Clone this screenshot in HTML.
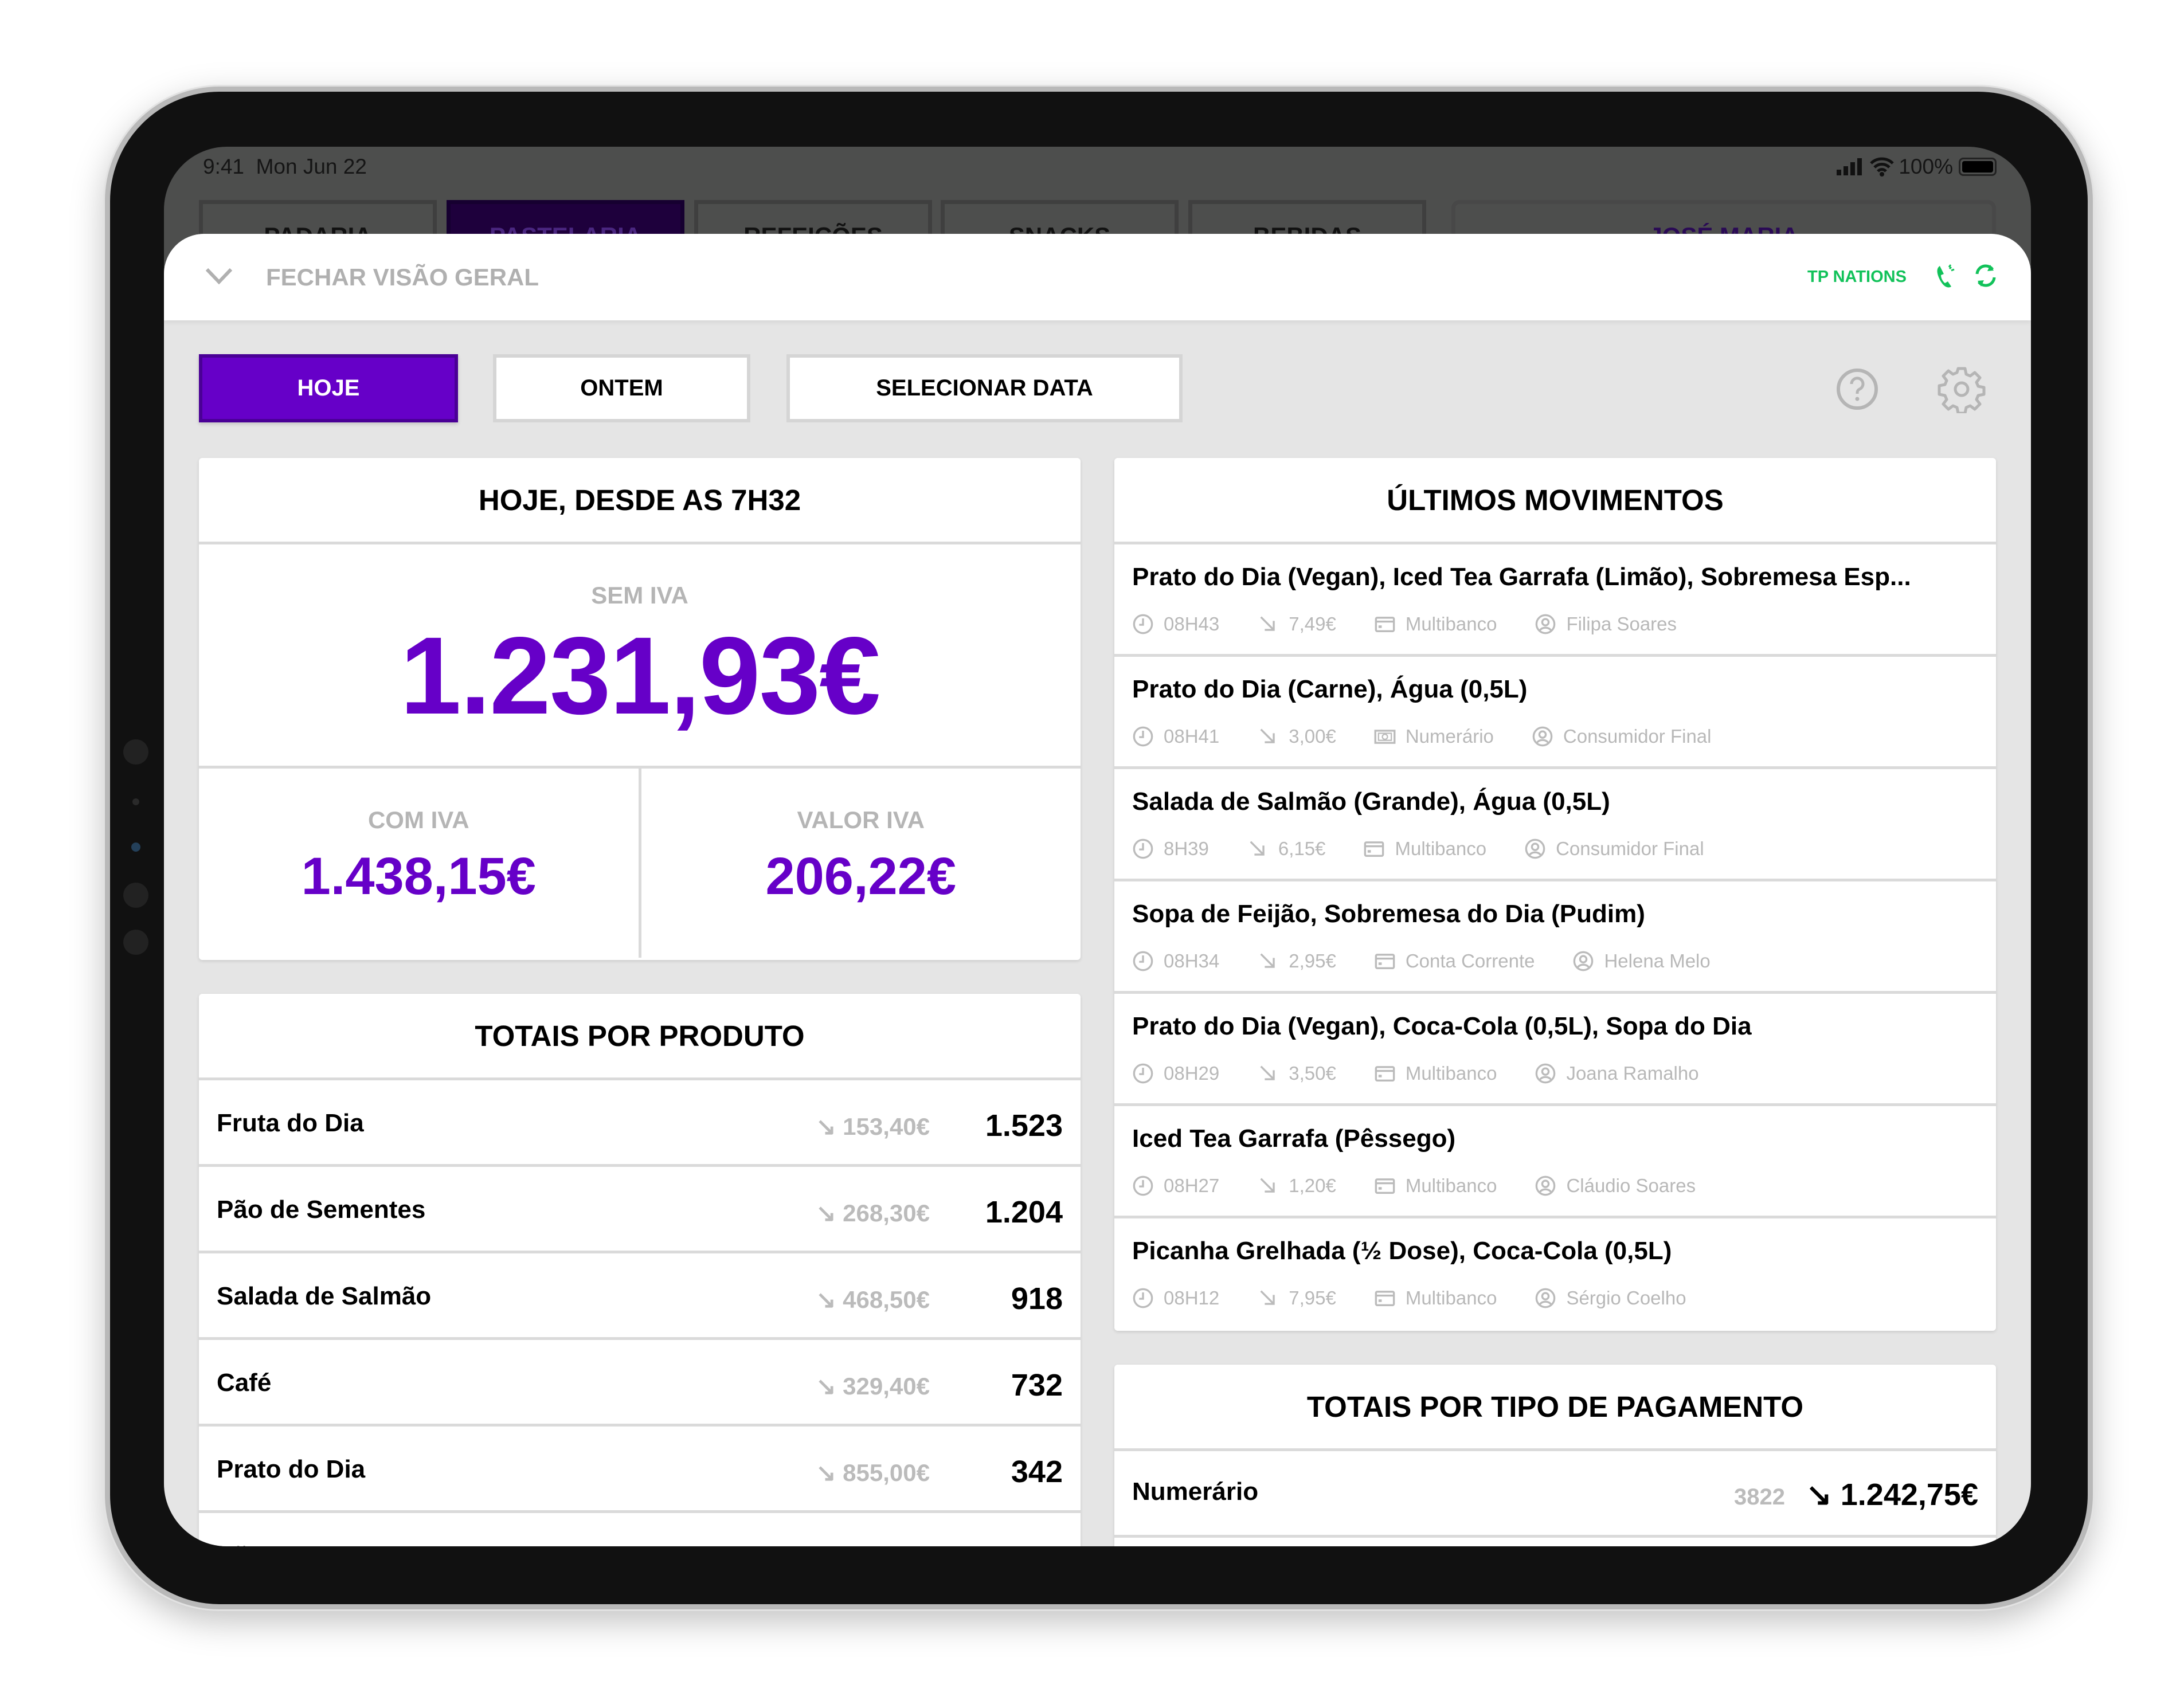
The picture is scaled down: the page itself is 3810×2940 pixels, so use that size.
<!DOCTYPE html>
<html><head><meta charset="utf-8"><style>
*{box-sizing:border-box;margin:0;padding:0}
body{width:3810px;height:2940px;background:#fff;position:relative;overflow:hidden;font-family:"Liberation Sans",sans-serif}
.abs{position:absolute}
#dev{left:183px;top:151px;width:3468px;height:2657px;border-radius:200px;background:#111;border:9px solid #b9b9b9;box-shadow:0 0 0 3px #e2e2e2,0 20px 60px rgba(0,0,0,.25)}
#scr{left:286px;top:256px;width:3257px;height:2442px;border-radius:110px;overflow:hidden;background:#4d4e4d}
.tab{position:absolute;top:93px;height:120px;border:7px solid #3f3f3f;border-bottom:none;background:#4d4e4d;overflow:hidden}
.tab span{position:absolute;top:32px;left:0;right:0;text-align:center;font-weight:bold;font-size:42px;color:#111}
#sheet{left:0;top:152px;width:3257px;height:2400px;background:#e5e5e5;border-radius:70px 70px 0 0;overflow:hidden}
#hdr{left:0;top:0;width:100%;height:151px;background:#fff;box-shadow:0 3px 8px rgba(0,0,0,.08)}
.btn{position:absolute;top:210px;height:119px;border:6px solid #d5d5d5;background:#fff;display:flex;align-items:center;justify-content:center;font-weight:bold;font-size:40px;color:#000}
.card{position:absolute;background:#fff;border-radius:6px;box-shadow:0 2px 6px rgba(0,0,0,.12);overflow:hidden}
.ch{height:151px;border-bottom:5px solid #dadada;display:flex;align-items:center;justify-content:center;font-weight:bold;font-size:51px;color:#000}
.lab{font-weight:bold;font-size:42px;color:#b5b5b5;text-align:center}
.pur{color:#6600c8;font-weight:bold;text-align:center}
.pr{height:151px;border-bottom:5px solid #dadada;position:relative}
.pr .n{position:absolute;left:31px;top:50px;font-size:44px;font-weight:bold;color:#000}
.pr .p{position:absolute;right:263px;top:56px;font-size:42px;color:#bbb;font-weight:bold}
.pr .c{position:absolute;right:31px;top:48px;font-size:54px;font-weight:bold;color:#000}
.mr{height:196px;border-bottom:5px solid #dadada;position:relative}
.mr .t{position:absolute;left:31px;top:32px;font-size:44px;font-weight:bold;color:#000;white-space:nowrap}
.mr .m{position:absolute;left:31px;top:120px;display:flex;align-items:center;font-size:33px;color:#b8b8b8;white-space:nowrap}
.m svg{width:38px;height:38px;margin-right:17px;flex:none}
.m b{font-weight:normal;margin-right:66px}
</style></head><body>
<div id="dev" class="abs"></div>
<div class="abs" style="left:215px;top:1290px;width:44px;height:44px;border-radius:50%;background:#222"></div>
<div class="abs" style="left:231px;top:1393px;width:12px;height:12px;border-radius:50%;background:#2a2a2a"></div>
<div class="abs" style="left:229px;top:1470px;width:16px;height:16px;border-radius:50%;background:#24405a"></div>
<div class="abs" style="left:215px;top:1540px;width:44px;height:44px;border-radius:50%;background:#222"></div>
<div class="abs" style="left:215px;top:1622px;width:44px;height:44px;border-radius:50%;background:#222"></div>
<div id="scr" class="abs">
 <div class="abs" style="left:68px;top:14px;font-size:37px;color:#151515">9:41&nbsp; Mon Jun 22</div>
 <div class="abs" style="right:60px;top:14px;font-size:37px;color:#151515;display:flex;align-items:center">
  <svg width="52" height="34" viewBox="0 0 52 34"><rect x="2" y="22" width="8" height="10" fill="#111"/><rect x="14" y="16" width="8" height="16" fill="#111"/><rect x="26" y="9" width="8" height="23" fill="#111"/><rect x="38" y="2" width="8" height="30" fill="#111"/></svg>
  <svg width="46" height="36" viewBox="0 0 46 36" style="margin:0 6px"><path d="M4 12a27 27 0 0 1 38 0M10 19a18 18 0 0 1 26 0M16 26a9 9 0 0 1 14 0" stroke="#111" stroke-width="5" fill="none"/><circle cx="23" cy="31" r="4" fill="#111"/></svg>
  <span>100%</span>
  <div style="margin-left:10px;width:66px;height:32px;border:3px solid #222;border-radius:8px;padding:3px"><div style="width:100%;height:100%;background:#000;border-radius:4px"></div></div>
 </div>
 <div class="tab" style="left:61px;width:415px"><span>PADARIA</span></div>
 <div class="tab" style="left:493px;width:415px;background:#1e003c;border-color:#160030"><span style="color:#4a2680">PASTELARIA</span></div>
 <div class="tab" style="left:925px;width:415px"><span>REFEIÇÕES</span></div>
 <div class="tab" style="left:1355px;width:415px"><span>SNACKS</span></div>
 <div class="tab" style="left:1787px;width:415px"><span>BEBIDAS</span></div>
 <div class="tab" style="left:2246px;width:950px;border-radius:14px 14px 0 0;border-color:#484848"><span style="color:#2a0a55">JOSÉ MARIA</span></div>
 <div id="sheet" class="abs">
  <div id="hdr" class="abs">
   <svg class="abs" style="left:71px;top:58px" width="50" height="30" viewBox="0 0 50 30"><path d="M4 4 L25 26 L46 4" stroke="#b0b0b0" stroke-width="6" fill="none"/></svg>
   <div class="abs" style="left:178px;top:52px;font-size:42px;font-weight:bold;color:#b0b0b0">FECHAR VISÃO GERAL</div>
   <div class="abs" style="left:2867px;top:59px;font-size:29px;font-weight:bold;color:#12c25a">TP NATIONS</div>
   <svg class="abs" style="left:3090px;top:52px" width="40" height="44" viewBox="0 0 40 44"><path d="M8 4c-6 4-6 12 0 24s14 16 20 12l-6-9-5 3c-4-3-7-9-7-14l5-2z" fill="#12c25a"/><path d="M24 6l3-4M28 12l5-2M25 9l3-3" stroke="#12c25a" stroke-width="3"/></svg>
   <svg class="abs" style="left:3156px;top:50px" width="44" height="46" viewBox="0 0 44 46"><path d="M7 20a15 15 0 0 1 27-8M37 26a15 15 0 0 1-27 8" stroke="#12c25a" stroke-width="5" fill="none"/><path d="M30 4l6 10-11 1z M14 42l-6-10 11-1z" fill="#12c25a"/></svg>
  </div>
  <div class="btn" style="left:61px;width:452px;background:#6600c8;border-color:#4a0096;color:#fff;box-shadow:0 3px 6px rgba(0,0,0,.15)">HOJE</div>
  <div class="btn" style="left:574px;width:449px">ONTEM</div>
  <div class="btn" style="left:1086px;width:691px">SELECIONAR DATA</div>
  <svg class="abs" style="left:2916px;top:233px" width="76" height="76" viewBox="0 0 76 76"><circle cx="38" cy="38" r="33" stroke="#b5b5b5" stroke-width="6" fill="none"/><path d="M28 29a10 10 0 1 1 14 9c-4 2-4 5-4 8" stroke="#b5b5b5" stroke-width="5" fill="none"/><circle cx="38" cy="55" r="3.5" fill="#b5b5b5"/></svg>
  <svg class="abs" style="left:3094px;top:229px" width="84" height="84" viewBox="0 0 84 84"><path d="M36 6h12l2 10 7 3 8-6 9 9-6 8 3 7 10 2v12l-10 2-3 7 6 8-9 9-8-6-7 3-2 10H36l-2-10-7-3-8 6-9-9 6-8-3-7-10-2V36l10-2 3-7-6-8 9-9 8 6 7-3z" stroke="#b5b5b5" stroke-width="5" fill="none" stroke-linejoin="round"/><circle cx="42" cy="42" r="11" stroke="#b5b5b5" stroke-width="5" fill="none"/></svg>

  <div class="card" style="left:61px;top:391px;width:1538px;height:876px">
   <div class="ch">HOJE, DESDE AS 7H32</div>
   <div style="height:391px;border-bottom:5px solid #dadada;position:relative">
    <div class="lab abs" style="left:0;right:0;top:65px">SEM IVA</div>
    <div class="pur abs" style="left:0;right:0;top:118px;font-size:192px;letter-spacing:-2px">1.231,93€</div>
   </div>
   <div style="display:flex;height:330px">
    <div style="flex:1;border-right:5px solid #dadada;position:relative"><div class="lab abs" style="left:0;right:0;top:66px">COM IVA</div><div class="pur abs" style="left:0;right:0;top:136px;font-size:92px">1.438,15€</div></div>
    <div style="flex:1;position:relative"><div class="lab abs" style="left:0;right:0;top:66px">VALOR IVA</div><div class="pur abs" style="left:0;right:0;top:136px;font-size:92px">206,22€</div></div>
   </div>
  </div>

  <div class="card" style="left:61px;top:1326px;width:1538px;height:1200px">
   <div class="ch">TOTAIS POR PRODUTO</div>
   <div class="pr"><span class="n">Fruta do Dia</span><span class="p">↘ 153,40€</span><span class="c">1.523</span></div>
   <div class="pr"><span class="n">Pão de Sementes</span><span class="p">↘ 268,30€</span><span class="c">1.204</span></div>
   <div class="pr"><span class="n">Salada de Salmão</span><span class="p">↘ 468,50€</span><span class="c">918</span></div>
   <div class="pr"><span class="n">Café</span><span class="p">↘ 329,40€</span><span class="c">732</span></div>
   <div class="pr"><span class="n">Prato do Dia</span><span class="p">↘ 855,00€</span><span class="c">342</span></div>
   <div class="pr"><span class="n">Pão</span><span class="p">↘ 120,00€</span><span class="c">300</span></div>
  </div>

  <div class="card" style="left:1658px;top:391px;width:1538px;height:1523px">
   <div class="ch">ÚLTIMOS MOVIMENTOS</div>
   <div class="mr"><div class="t">Prato do Dia (Vegan), Iced Tea Garrafa (Limão), Sobremesa Esp...</div><div class="m"><svg viewBox="0 0 34 34"><circle cx="17" cy="17" r="14" stroke="#bbb" stroke-width="3" fill="none"/><path d="M17 8v10h-6" stroke="#bbb" stroke-width="3" fill="none"/></svg><b>08H43</b><svg viewBox="0 0 34 34"><path d="M6 6l20 20M12 26h14V12" stroke="#bbb" stroke-width="3" fill="none"/></svg><b>7,49€</b><svg viewBox="0 0 34 34"><rect x="3" y="7" width="28" height="21" rx="2" stroke="#bbb" stroke-width="3" fill="none"/><path d="M3 13h28" stroke="#bbb" stroke-width="3"/><rect x="7" y="19" width="5" height="4" fill="#bbb"/></svg><b>Multibanco</b><svg viewBox="0 0 34 34"><circle cx="17" cy="17" r="14" stroke="#bbb" stroke-width="3" fill="none"/><circle cx="17" cy="14" r="5" stroke="#bbb" stroke-width="3" fill="none"/><path d="M8 27c4-6 14-6 18 0" stroke="#bbb" stroke-width="3" fill="none"/></svg><b>Filipa Soares</b></div></div>
   <div class="mr"><div class="t">Prato do Dia (Carne), Água (0,5L)</div><div class="m"><svg viewBox="0 0 34 34"><circle cx="17" cy="17" r="14" stroke="#bbb" stroke-width="3" fill="none"/><path d="M17 8v10h-6" stroke="#bbb" stroke-width="3" fill="none"/></svg><b>08H41</b><svg viewBox="0 0 34 34"><path d="M6 6l20 20M12 26h14V12" stroke="#bbb" stroke-width="3" fill="none"/></svg><b>3,00€</b><svg viewBox="0 0 34 34"><rect x="2" y="8" width="30" height="19" stroke="#bbb" stroke-width="3" fill="none"/><rect x="7" y="12" width="20" height="11" stroke="#bbb" stroke-width="2" fill="none"/><circle cx="17" cy="17.5" r="4" stroke="#bbb" stroke-width="2" fill="none"/></svg><b>Numerário</b><svg viewBox="0 0 34 34"><circle cx="17" cy="17" r="14" stroke="#bbb" stroke-width="3" fill="none"/><circle cx="17" cy="14" r="5" stroke="#bbb" stroke-width="3" fill="none"/><path d="M8 27c4-6 14-6 18 0" stroke="#bbb" stroke-width="3" fill="none"/></svg><b>Consumidor Final</b></div></div>
   <div class="mr"><div class="t">Salada de Salmão (Grande), Água (0,5L)</div><div class="m"><svg viewBox="0 0 34 34"><circle cx="17" cy="17" r="14" stroke="#bbb" stroke-width="3" fill="none"/><path d="M17 8v10h-6" stroke="#bbb" stroke-width="3" fill="none"/></svg><b>8H39</b><svg viewBox="0 0 34 34"><path d="M6 6l20 20M12 26h14V12" stroke="#bbb" stroke-width="3" fill="none"/></svg><b>6,15€</b><svg viewBox="0 0 34 34"><rect x="3" y="7" width="28" height="21" rx="2" stroke="#bbb" stroke-width="3" fill="none"/><path d="M3 13h28" stroke="#bbb" stroke-width="3"/><rect x="7" y="19" width="5" height="4" fill="#bbb"/></svg><b>Multibanco</b><svg viewBox="0 0 34 34"><circle cx="17" cy="17" r="14" stroke="#bbb" stroke-width="3" fill="none"/><circle cx="17" cy="14" r="5" stroke="#bbb" stroke-width="3" fill="none"/><path d="M8 27c4-6 14-6 18 0" stroke="#bbb" stroke-width="3" fill="none"/></svg><b>Consumidor Final</b></div></div>
   <div class="mr"><div class="t">Sopa de Feijão, Sobremesa do Dia (Pudim)</div><div class="m"><svg viewBox="0 0 34 34"><circle cx="17" cy="17" r="14" stroke="#bbb" stroke-width="3" fill="none"/><path d="M17 8v10h-6" stroke="#bbb" stroke-width="3" fill="none"/></svg><b>08H34</b><svg viewBox="0 0 34 34"><path d="M6 6l20 20M12 26h14V12" stroke="#bbb" stroke-width="3" fill="none"/></svg><b>2,95€</b><svg viewBox="0 0 34 34"><rect x="3" y="7" width="28" height="21" rx="2" stroke="#bbb" stroke-width="3" fill="none"/><path d="M3 13h28" stroke="#bbb" stroke-width="3"/><rect x="7" y="19" width="5" height="4" fill="#bbb"/></svg><b>Conta Corrente</b><svg viewBox="0 0 34 34"><circle cx="17" cy="17" r="14" stroke="#bbb" stroke-width="3" fill="none"/><circle cx="17" cy="14" r="5" stroke="#bbb" stroke-width="3" fill="none"/><path d="M8 27c4-6 14-6 18 0" stroke="#bbb" stroke-width="3" fill="none"/></svg><b>Helena Melo</b></div></div>
   <div class="mr"><div class="t">Prato do Dia (Vegan), Coca-Cola (0,5L), Sopa do Dia</div><div class="m"><svg viewBox="0 0 34 34"><circle cx="17" cy="17" r="14" stroke="#bbb" stroke-width="3" fill="none"/><path d="M17 8v10h-6" stroke="#bbb" stroke-width="3" fill="none"/></svg><b>08H29</b><svg viewBox="0 0 34 34"><path d="M6 6l20 20M12 26h14V12" stroke="#bbb" stroke-width="3" fill="none"/></svg><b>3,50€</b><svg viewBox="0 0 34 34"><rect x="3" y="7" width="28" height="21" rx="2" stroke="#bbb" stroke-width="3" fill="none"/><path d="M3 13h28" stroke="#bbb" stroke-width="3"/><rect x="7" y="19" width="5" height="4" fill="#bbb"/></svg><b>Multibanco</b><svg viewBox="0 0 34 34"><circle cx="17" cy="17" r="14" stroke="#bbb" stroke-width="3" fill="none"/><circle cx="17" cy="14" r="5" stroke="#bbb" stroke-width="3" fill="none"/><path d="M8 27c4-6 14-6 18 0" stroke="#bbb" stroke-width="3" fill="none"/></svg><b>Joana Ramalho</b></div></div>
   <div class="mr"><div class="t">Iced Tea Garrafa (Pêssego)</div><div class="m"><svg viewBox="0 0 34 34"><circle cx="17" cy="17" r="14" stroke="#bbb" stroke-width="3" fill="none"/><path d="M17 8v10h-6" stroke="#bbb" stroke-width="3" fill="none"/></svg><b>08H27</b><svg viewBox="0 0 34 34"><path d="M6 6l20 20M12 26h14V12" stroke="#bbb" stroke-width="3" fill="none"/></svg><b>1,20€</b><svg viewBox="0 0 34 34"><rect x="3" y="7" width="28" height="21" rx="2" stroke="#bbb" stroke-width="3" fill="none"/><path d="M3 13h28" stroke="#bbb" stroke-width="3"/><rect x="7" y="19" width="5" height="4" fill="#bbb"/></svg><b>Multibanco</b><svg viewBox="0 0 34 34"><circle cx="17" cy="17" r="14" stroke="#bbb" stroke-width="3" fill="none"/><circle cx="17" cy="14" r="5" stroke="#bbb" stroke-width="3" fill="none"/><path d="M8 27c4-6 14-6 18 0" stroke="#bbb" stroke-width="3" fill="none"/></svg><b>Cláudio Soares</b></div></div>
   <div class="mr" style="border-bottom:none"><div class="t">Picanha Grelhada (½ Dose), Coca-Cola (0,5L)</div><div class="m"><svg viewBox="0 0 34 34"><circle cx="17" cy="17" r="14" stroke="#bbb" stroke-width="3" fill="none"/><path d="M17 8v10h-6" stroke="#bbb" stroke-width="3" fill="none"/></svg><b>08H12</b><svg viewBox="0 0 34 34"><path d="M6 6l20 20M12 26h14V12" stroke="#bbb" stroke-width="3" fill="none"/></svg><b>7,95€</b><svg viewBox="0 0 34 34"><rect x="3" y="7" width="28" height="21" rx="2" stroke="#bbb" stroke-width="3" fill="none"/><path d="M3 13h28" stroke="#bbb" stroke-width="3"/><rect x="7" y="19" width="5" height="4" fill="#bbb"/></svg><b>Multibanco</b><svg viewBox="0 0 34 34"><circle cx="17" cy="17" r="14" stroke="#bbb" stroke-width="3" fill="none"/><circle cx="17" cy="14" r="5" stroke="#bbb" stroke-width="3" fill="none"/><path d="M8 27c4-6 14-6 18 0" stroke="#bbb" stroke-width="3" fill="none"/></svg><b>Sérgio Coelho</b></div></div>
  </div>

  <div class="card" style="left:1658px;top:1973px;width:1538px;height:600px">
   <div class="ch">TOTAIS POR TIPO DE PAGAMENTO</div>
   <div class="pr"><span class="n" style="top:46px">Numerário</span><span class="p" style="right:368px;top:58px;font-size:40px">3822</span><span class="c" style="top:44px">↘ 1.242,75€</span></div>
   <div class="pr"></div>
  </div>
 </div>
</div>
</body></html>
